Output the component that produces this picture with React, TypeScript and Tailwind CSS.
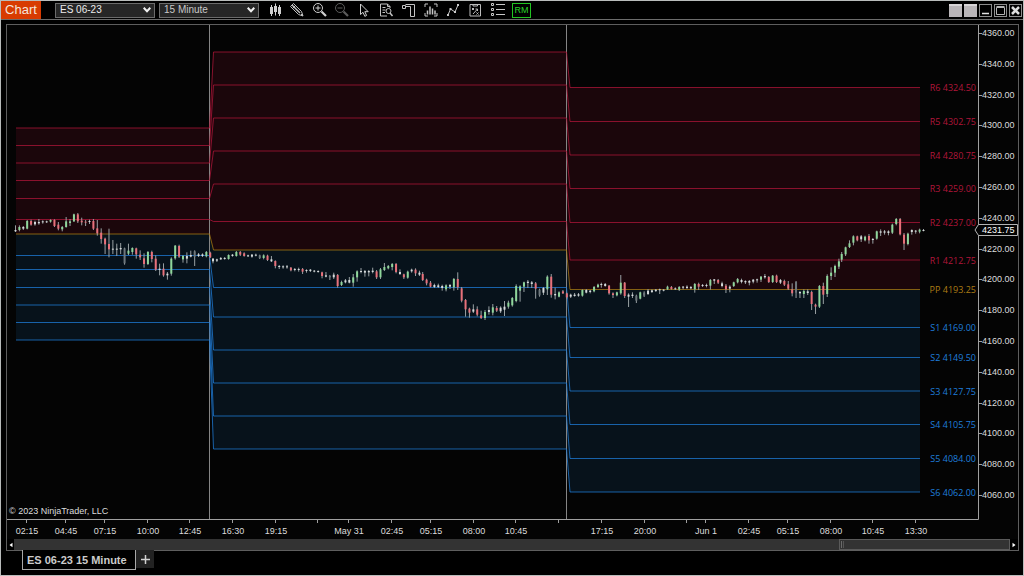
import React, { useState } from "react";

type Kind = "g" | "r" | "w" | "d";
type Bar = [Kind, number, number, number, number];

interface BarGroup {
    x: number;
    y: number;
    bars: Bar[];
}

const BAR_STEP = 3.895;

const BAR_COLORS: Record<Kind, string> = {
    g: "#8fd69b",
    r: "#e8707a",
    w: "#d6dadb",
    d: "#6d767b",
};

// [kind, high, body top, body bottom, low], in thirds of a pixel below the group's y
const barGroups: BarGroup[] = [
    {
        x: 15.5,
        y: 120,
        bars: [
            ["w", 316, 330, 334, 336], ["g", 316, 321, 330, 334], ["w", 318, 321, 326, 330], ["g", 300, 303, 326, 328],
            ["r", 299, 303, 314, 317], ["w", 302, 306, 313, 317], ["w", 297, 306, 310, 314], ["w", 301, 304, 307, 311],
            ["w", 302, 304, 307, 309], ["g", 298, 300, 305, 308], ["r", 298, 300, 318, 321], ["r", 306, 314, 326, 331],
            ["g", 318, 321, 328, 334], ["g", 291, 304, 321, 323], ["g", 297, 304, 309, 318], ["g", 281, 283, 304, 306],
            ["r", 279, 283, 304, 309], ["r", 293, 302, 307, 316], ["r", 300, 305, 308, 318], ["w", 299, 303, 306, 312],
            ["r", 297, 303, 326, 330], ["r", 300, 325, 340, 347], ["r", 325, 338, 357, 371], ["r", 353, 356, 373, 402],
            ["r", 326, 372, 388, 412], ["w", 360, 386, 389, 402], ["w", 371, 386, 389, 408], ["w", 369, 384, 388, 402],
            ["d", 383, 385, 430, 434], ["g", 371, 392, 401, 405], ["g", 382, 384, 396, 404], ["r", 383, 385, 403, 416],
            ["r", 391, 404, 412, 420], ["r", 400, 415, 432, 443], ["g", 393, 396, 432, 435], ["r", 392, 396, 417, 427],
            ["r", 406, 416, 449, 453], ["w", 431, 446, 450, 466], ["r", 430, 446, 466, 470], ["w", 456, 461, 466, 479],
            ["g", 412, 416, 461, 467], ["g", 375, 377, 415, 419], ["r", 374, 378, 410, 414], ["g", 405, 408, 418, 428],
            ["w", 397, 408, 416, 430], ["w", 392, 405, 410, 412], ["d", 391, 394, 410, 438], ["w", 399, 403, 408, 411],
            ["w", 400, 403, 408, 411], ["g", 393, 396, 409, 412], ["r", 395, 398, 412, 414],
        ],
    },
    {
        x: 213,
        y: 190,
        bars: [
            ["w", 204, 206, 214, 220], ["w", 206, 208, 212, 216], ["w", 201, 204, 208, 210], ["w", 201, 204, 206, 209],
            ["g", 193, 195, 207, 209], ["w", 192, 194, 198, 200], ["g", 183, 186, 198, 200], ["r", 183, 186, 194, 198],
            ["r", 187, 190, 198, 200], ["w", 194, 196, 199, 201], ["w", 192, 194, 200, 203], ["w", 191, 194, 197, 199],
            ["d", 194, 196, 204, 207], ["g", 193, 196, 204, 208], ["r", 194, 197, 210, 213], ["w", 198, 208, 214, 216],
            ["r", 211, 213, 228, 235], ["w", 225, 228, 231, 237], ["w", 226, 229, 232, 236], ["w", 225, 229, 232, 236],
            ["r", 231, 233, 241, 244], ["w", 234, 237, 240, 244], ["w", 233, 237, 240, 245], ["r", 234, 237, 245, 252],
            ["w", 238, 240, 243, 248], ["w", 237, 239, 243, 246], ["w", 240, 242, 245, 247], ["w", 241, 243, 246, 248],
            ["r", 245, 247, 258, 265], ["w", 246, 256, 260, 262], ["d", 255, 258, 262, 270], ["w", 248, 254, 262, 267],
            ["r", 252, 255, 288, 293], ["g", 272, 276, 285, 288], ["w", 267, 271, 277, 280], ["w", 261, 270, 278, 280],
            ["g", 252, 262, 278, 290], ["g", 241, 244, 262, 275], ["w", 234, 243, 246, 250], ["w", 240, 243, 248, 260],
            ["w", 240, 243, 247, 259], ["w", 233, 242, 246, 250], ["r", 240, 244, 262, 267], ["g", 234, 238, 262, 267],
            ["g", 219, 231, 240, 243], ["g", 225, 228, 235, 238], ["g", 219, 222, 231, 241], ["r", 219, 222, 246, 250],
            ["w", 238, 246, 252, 255], ["r", 251, 253, 262, 267], ["g", 242, 245, 263, 266], ["w", 236, 239, 244, 248],
            ["r", 235, 239, 250, 258], ["w", 242, 248, 254, 258],
        ],
    },
    {
        x: 422.7,
        y: 230,
        bars: [
            ["r", 126, 132, 150, 153], ["r", 146, 149, 160, 166], ["r", 153, 158, 170, 172], ["w", 161, 165, 171, 174],
            ["w", 161, 166, 171, 174], ["w", 164, 168, 174, 182], ["g", 163, 166, 178, 184], ["w", 162, 165, 170, 177],
            ["g", 144, 147, 172, 182], ["r", 127, 147, 172, 180], ["r", 171, 175, 212, 217], ["r", 207, 210, 238, 260],
            ["r", 233, 236, 248, 263], ["w", 223, 238, 245, 249], ["r", 229, 238, 254, 259], ["r", 242, 256, 264, 267],
            ["g", 240, 246, 264, 270], ["w", 229, 240, 246, 254], ["g", 222, 232, 248, 256], ["r", 228, 234, 242, 246],
            ["w", 229, 233, 244, 249], ["w", 213, 230, 239, 258], ["g", 212, 218, 230, 236], ["g", 201, 204, 226, 230],
            ["g", 163, 168, 213, 217], ["g", 166, 169, 182, 215], ["g", 155, 157, 170, 186], ["w", 150, 155, 159, 174],
            ["w", 153, 157, 162, 174], ["r", 156, 160, 176, 206], ["d", 176, 179, 196, 200], ["w", 171, 174, 188, 195],
            ["g", 136, 140, 178, 195], ["r", 132, 140, 194, 203], ["w", 173, 192, 196, 208], ["g", 184, 187, 200, 202],
            ["r", 180, 184, 190, 192], ["r", 188, 190, 202, 206], ["w", 191, 194, 200, 204], ["w", 189, 194, 198, 200],
            ["w", 189, 193, 197, 200], ["g", 178, 180, 197, 200], ["w", 177, 180, 188, 190], ["w", 180, 182, 186, 190],
            ["g", 168, 171, 184, 187], ["g", 161, 164, 171, 174],
        ],
    },
    {
        x: 601.3,
        y: 230,
        bars: [
            ["w", 158, 162, 165, 173], ["w", 159, 162, 168, 170], ["r", 165, 167, 190, 194], ["r", 187, 190, 195, 204],
            ["g", 185, 187, 196, 199], ["g", 135, 158, 190, 194], ["r", 156, 158, 198, 204], ["w", 190, 194, 200, 231],
            ["w", 187, 194, 198, 204], ["d", 194, 197, 212, 219], ["g", 185, 187, 206, 208], ["d", 184, 188, 197, 201],
            ["w", 177, 182, 192, 195], ["w", 178, 181, 186, 189], ["w", 177, 179, 183, 186], ["w", 176, 178, 181, 192],
            ["w", 177, 179, 182, 184], ["g", 167, 170, 178, 180], ["r", 168, 171, 177, 179], ["w", 172, 175, 178, 180],
            ["g", 168, 171, 179, 183], ["w", 168, 170, 173, 178], ["w", 166, 170, 174, 177], ["w", 168, 171, 175, 178],
            ["g", 159, 162, 178, 188], ["r", 158, 162, 170, 180], ["w", 162, 165, 168, 171], ["w", 161, 165, 168, 172],
            ["g", 147, 150, 167, 179], ["w", 147, 148, 152, 162], ["r", 147, 150, 158, 162], ["w", 155, 160, 168, 172],
            ["r", 162, 167, 178, 189], ["w", 166, 170, 176, 187], ["g", 155, 157, 168, 171], ["g", 144, 147, 157, 160],
            ["w", 146, 150, 156, 160], ["w", 151, 153, 157, 162], ["w", 150, 153, 158, 166], ["w", 147, 149, 155, 160],
            ["w", 146, 148, 151, 158], ["g", 138, 140, 149, 156], ["w", 132, 138, 142, 146], ["r", 138, 141, 156, 159],
            ["g", 135, 137, 156, 159], ["r", 134, 137, 156, 159], ["w", 147, 150, 158, 162], ["r", 149, 153, 164, 168],
            ["r", 153, 163, 176, 180], ["r", 160, 178, 190, 199], ["d", 153, 156, 188, 204], ["w", 183, 186, 190, 204],
            ["g", 178, 183, 192, 204], ["w", 178, 184, 189, 195], ["r", 182, 186, 222, 240], ["r", 221, 224, 230, 252],
            ["g", 165, 168, 230, 234], ["r", 158, 168, 194, 222], ["g", 133, 138, 192, 201], ["g", 112, 128, 138, 150],
            ["g", 104, 108, 128, 141], ["g", 86, 94, 110, 117],
        ],
    },
    {
        x: 841.7,
        y: 200,
        bars: [
            ["g", 156, 162, 179, 186], ["g", 140, 142, 163, 168], ["g", 121, 130, 141, 144], ["g", 106, 109, 128, 136],
            ["r", 107, 109, 121, 124], ["w", 105, 109, 118, 126], ["g", 107, 110, 121, 124], ["r", 102, 108, 121, 131],
            ["w", 114, 117, 120, 131], ["g", 92, 94, 116, 119], ["w", 88, 94, 98, 108], ["w", 90, 94, 98, 104],
            ["w", 91, 94, 99, 106], ["g", 71, 74, 98, 102], ["g", 54, 57, 72, 76], ["r", 54, 57, 103, 106],
            ["r", 99, 104, 131, 150], ["g", 98, 101, 132, 136], ["w", 88, 90, 96, 104], ["w", 90, 92, 95, 101],
            ["g", 86, 89, 95, 100], ["w", 87, 90, 92, 94],
        ],
    },
];

// y of each level in the three sessions
const levels = [
    { label: "R6 4324.50", y: [128, 52, 87.5], color: "#b0163a" },
    { label: "R5 4302.75", y: [145.5, 85, 121.5], color: "#b0163a" },
    { label: "R4 4280.75", y: [163, 118, 155], color: "#b0163a" },
    { label: "R3 4259.00", y: [180.5, 151, 188.5], color: "#b0163a" },
    { label: "R2 4237.00", y: [198.5, 184, 222.5], color: "#b0163a" },
    { label: "R1 4212.75", y: [219.5, 221.5, 260], color: "#b0163a" },
    { label: "PP 4193.25", y: [234, 250, 289.5], color: "#ad7d14" },
    { label: "S1 4169.00", y: [255.5, 287.5, 327.5], color: "#1f7edb" },
    { label: "S2 4149.50", y: [269.5, 317, 357.5], color: "#1f7edb" },
    { label: "S3 4127.75", y: [287.5, 350, 391], color: "#1f7edb" },
    { label: "S4 4105.75", y: [305, 383, 424.5], color: "#1f7edb" },
    { label: "S5 4084.00", y: [322.5, 416, 458.5], color: "#1f7edb" },
    { label: "S6 4062.00", y: [340, 449, 492], color: "#1f7edb" },
];

const SESSION_X = [16, 209.5, 213.5, 566.5, 570, 920];

const times = [
    { x: 27, label: "02:15" },
    { x: 66, label: "04:45" },
    { x: 105, label: "07:15" },
    { x: 148, label: "10:00" },
    { x: 190, label: "12:45" },
    { x: 233, label: "16:30" },
    { x: 276, label: "19:15" },
    { x: 318, label: "" },
    { x: 349, label: "May 31" },
    { x: 392, label: "02:45" },
    { x: 431, label: "05:15" },
    { x: 474, label: "08:00" },
    { x: 516, label: "10:45" },
    { x: 559, label: "" },
    { x: 602, label: "17:15" },
    { x: 645, label: "20:00" },
    { x: 687, label: "" },
    { x: 706, label: "Jun 1" },
    { x: 749, label: "02:45" },
    { x: 788, label: "05:15" },
    { x: 831, label: "08:00" },
    { x: 873, label: "10:45" },
    { x: 916, label: "13:30" },
];

const prices = Array.from({ length: 16 }, (_, i) => 4360 - i * 20);

const levelPoints = (y: number[]) => SESSION_X.map((x, i) => `${x},${y[Math.floor(i / 2)]}`);

const areaPoints = (a: number[], b: number[]) => [...levelPoints(a), ...levelPoints(b).reverse()].join(" ");

function PriceChart() {
    return (
        <svg viewBox="7 25 1011 514" className="block h-auto w-full bg-[#040404] font-['Liberation_Sans',Arial,sans-serif]" role="img" aria-label="ES 06-23 15 minute chart with pivot levels">
            <polygon points={areaPoints(levels[0].y, levels[6].y)} fill="#1b060b" />
            <polygon points={areaPoints(levels[6].y, levels[12].y)} fill="#07121b" />

            <path d="M209.5 25V519M566.5 25V519" stroke="#858585" fill="none" />

            {levels.map((level) => (
                <polyline key={level.label} points={levelPoints(level.y).join(" ")} fill="none" stroke={level.color} strokeWidth={1} strokeOpacity={0.75} />
            ))}

            {barGroups.map((group) =>
                group.bars.map(([kind, high, top, bottom, low], i) => {
                    const x = group.x + i * BAR_STEP;
                    return (
                        <g key={`${group.x}-${i}`}>
                            <rect x={x - 0.5} y={group.y + high / 3} width={1} height={(low - high) / 3} fill="#98a0a3" />
                            <rect x={x - 1} y={group.y + top / 3} width={2} height={Math.max(1, (bottom - top) / 3)} fill={BAR_COLORS[kind]} />
                        </g>
                    );
                })
            )}

            {levels.map((level) => (
                <text key={level.label} x={976} y={Math.floor(level.y[2]) + 4} textAnchor="end" fontSize={9} fill={level.color} className="font-['Open_Sans',sans-serif]">
                    {level.label}
                </text>
            ))}

            {/* Price axis */}
            <path d="M978.5 25V519.5H7" stroke="#a0a0a0" fill="none" />
            {prices.map((price, i) => (
                <g key={price}>
                    <path d={`M979 ${Math.round(33 + i * 30.8) + 0.5}h3`} stroke="#a0a0a0" />
                    <text x={982} y={Math.round(33 + i * 30.8) + 3} fontSize={9} fill="#dcdcdc">
                        {price.toFixed(2)}
                    </text>
                </g>
            ))}
            <path d="M975 230l3.5-5.5H1017.5v11H978.5z" fill="#040404" stroke="#b4b4b4" />
            <text x={982} y={233} fontSize={9} fill="#ffffff">4231.75</text>

            {/* Time axis */}
            {times.map((time) => (
                <g key={time.x}>
                    <path d={`M${time.x - 0.5} 520v3`} stroke="#a0a0a0" />
                    <text x={time.x} y={534} textAnchor="middle" fontSize={9} fill="#dcdcdc">{time.label}</text>
                </g>
            ))}

            <text x={9} y={514} fontSize={9} fill="#dcdcdc">© 2023 NinjaTrader, LLC</text>
        </svg>
    );
}

const tools = [
    {
        name: "Chart style",
        color: "text-[#d0d0d0]",
        icon: (
            <>
                <path d="M4.5 3v11M8.5 1.500v12M12.5 3v11" />
                <path d="M3 5h3v7H3zM7 4h3v6H7zM11 5h3v7h-3z" fill="currentColor" stroke="none" />
            </>
        ),
    },
    {
        name: "Drawing tools",
        color: "text-[#c0c0c0]",
        icon: (
            <>
                <path d="M1.5 4.500L4.500 1.5l8 8 1.500 4.500-4.500-1.500z" />
                <path d="M3 3l8 8" strokeWidth={1.5} />
                <path d="M3.500 6.500l3-3M12 12l2 2" />
            </>
        ),
    },
    {
        name: "Zoom in",
        color: "text-[#d0d0d0]",
        icon: (
            <>
                <circle cx="6" cy="6" r="4.5" />
                <path d="M3.5 6h5M6 3.500v5" />
                <path d="M9.500 9.500l4.500 4.500" strokeWidth={2.2} />
            </>
        ),
    },
    {
        name: "Zoom out",
        color: "text-[#5c5c5c]",
        icon: (
            <>
                <circle cx="6" cy="6" r="4.5" />
                <path d="M3.500 6h5" />
                <path d="M9.500 9.500l4.500 4.500" strokeWidth={2.2} />
            </>
        ),
    },
    { name: "Cursor", color: "text-[#d0d0d0]", icon: <path d="M4.500 2v10.500l2.500-2.200 1.800 4 1.800-.8-1.800-3.800h3.400z" /> },
    {
        name: "Data box",
        color: "text-[#c4c4c4]",
        icon: (
            <>
                <path d="M12 6V4.500L9.500 2H2.500v12H9M9.500 2v2.500H12M4.500 5.500h3M4.500 8h3M4.500 10.500h2.500" />
                <circle cx="10.500" cy="9" r="2.500" />
                <path d="M12 11l2.500 3" strokeWidth={1.500} />
            </>
        ),
    },
    { name: "Chart trader", color: "text-[#c4c4c4]", icon: <path d="M1.500 3.500h3v3h-3zM4.500 4.500h5M4.500 2.500h9v12h-4v-10" /> },
    {
        name: "Data series",
        color: "text-[#c4c4c4]",
        icon: (
            <>
                <path d="M2 5V2h3M11 2h3v3M14 11v3h-3M5 14H2v-3" />
                <path d="M4.500 8.500v4M7 4.500v8M9.500 6.500v6M12 8.500v4" strokeWidth={1.500} />
            </>
        ),
    },
    {
        name: "Indicators",
        color: "text-[#c8c8c8]",
        icon: (
            <>
                <path d="M3 13l2.500-6 4.500 3 3-7" />
                <path d="M2 12h2v2H2zM4.500 6h2v2h-2zM9 9h2v2H9zM12 2h2v2h-2z" fill="currentColor" stroke="none" />
            </>
        ),
    },
    {
        name: "Strategies",
        color: "text-[#bcbcbc]",
        icon: (
            <>
                <path d="M3 2.500h10.500v11.500H3zM6 2.500v1.500h4.500V2.500" />
                <path d="M5 6l2 2M7 6L5 8M6 12l4.500-5M8.500 7h2v2M9.500 10.500l2 2M11.500 10.500l-2 2" />
            </>
        ),
    },
    {
        name: "Properties",
        color: "text-[#c8c8c8]",
        icon: (
            <>
                <path d="M1.500 1.500h2v2h-2zM1.500 6.500h2v2h-2zM1.500 11.500h2v2h-2z" />
                <path d="M6 2.500H15M6 7.500H15M6 12.500H15" />
            </>
        ),
    },
];

function ToolbarSelect({ label, options, tone }: { label: string; options: string[]; tone: string }) {
    const [value, setValue] = useState(options[0]);

    return (
        <div className="grid h-[15px] w-[100px] shrink-0 items-center">
            <select
                aria-label={label}
                value={value}
                onChange={(e) => setValue(e.target.value)}
                className={`col-start-1 row-start-1 h-[15px] w-full appearance-none border border-[#6b6b6b] bg-[#262626] px-1 text-[10px] leading-3 ${tone}`}
            >
                {options.map((option) => (
                    <option key={option}>{option}</option>
                ))}
            </select>
            <svg viewBox="0 0 8 6" className="pointer-events-none col-start-1 row-start-1 mr-1 h-[6px] w-[8px] justify-self-end" fill="none" stroke="#f0f0f0" strokeWidth="2">
                <path d="M.7 .8L4 4.300 7.300 .8" />
            </svg>
        </div>
    );
}

export default function App() {
    return (
        <div className="flex min-h-screen flex-col border border-[#b9bcbb] bg-black font-['Liberation_Sans',Arial,sans-serif] text-[#d4d4d4]">
            <header className="flex h-[19px] items-center border-b border-[#6b6b6b]">
                <h1 className="h-[18px] w-10 shrink-0 bg-[#d83b01] text-center text-[13px] leading-[18px] text-[#f4e4dc]">Chart</h1>
                <div className="ml-[14px] flex gap-1">
                    <ToolbarSelect label="Instrument" options={["ES 06-23", "NQ 06-23"]} tone="text-[#ececec]" />
                    <ToolbarSelect label="Interval" options={["15 Minute", "5 Minute"]} tone="text-[#c8c8c8]" />
                </div>
                <div className="ml-2 flex w-[264px] shrink-0 items-center justify-between">
                    {tools.map((tool) => (
                        <button key={tool.name} type="button" aria-label={tool.name} className={`h-4 w-4 ${tool.color}`}>
                            <svg viewBox="0 0 16 16" className="h-4 w-4" fill="none" stroke="currentColor" strokeWidth="1">
                                {tool.icon}
                            </svg>
                        </button>
                    ))}
                    <button type="button" className="h-[15px] w-[19px] border border-[#22c322] text-center text-[9px] leading-[13px] text-[#2bd62b]">
                        RM
                    </button>
                </div>
                <div className="ml-auto flex gap-[2px] pr-px">
                    <button type="button" aria-label="Instrument link" className="h-[13px] w-[13px] border-t-2 border-[#d8d5d7] bg-[#b9b5b8]" />
                    <button type="button" aria-label="Interval link" className="h-[13px] w-[13px] border-t-2 border-[#d8d5d7] bg-[#b9b5b8]" />
                    <button type="button" aria-label="Minimize" className="h-[13px] w-[13px] border border-[#8c8c8c]">
                        <svg viewBox="0 0 11 11" className="block h-[11px] w-[11px]" stroke="#e0e0e0" strokeWidth="1.500">
                            <path d="M2 8.500h7" />
                        </svg>
                    </button>
                    <button type="button" aria-label="Maximize" className="h-[13px] w-[13px] border border-[#8c8c8c]">
                        <svg viewBox="0 0 11 11" className="block h-[11px] w-[11px]" fill="none" stroke="#b4b4b4">
                            <path d="M1.500 2.500h8v7h-8zM1.500 1.500h8" />
                        </svg>
                    </button>
                    <button type="button" aria-label="Close" className="h-[13px] w-[13px] border border-[#8c8c8c]">
                        <svg viewBox="0 0 11 11" className="block h-[11px] w-[11px]" stroke="#dcdcdc" strokeWidth="2.500">
                            <path d="M2 2l7 7M9 2L2 9" />
                        </svg>
                    </button>
                </div>
            </header>

            <main className="mt-1 mr-1 ml-[5px] border border-[#5e5e5e]">
                <PriceChart />
                <div className="flex h-[11px]">
                    <button type="button" aria-label="Scroll left" className="flex w-[7px] items-center justify-center">
                        <svg viewBox="0 0 4 6" className="h-[6px] w-[4px]" fill="#ffffff">
                            <path d="M3.500 .8v4.400L.5 3z" />
                        </svg>
                    </button>
                    <div className="flex-[827] bg-[#333333]" />
                    <div className="flex flex-[168] items-center gap-px border border-[#5a5a5a] bg-[#333333] pl-px">
                        <div className="h-[7px] w-px bg-[#6a6a6a]" />
                        <div className="h-[7px] w-px bg-[#555555]" />
                    </div>
                    <button type="button" aria-label="Scroll right" className="flex w-2 items-center justify-center">
                        <svg viewBox="0 0 4 6" className="h-[6px] w-[4px]" fill="#ffffff">
                            <path d="M.5 .8v4.400l3-2.200z" />
                        </svg>
                    </button>
                </div>
            </main>

            <nav className="-mt-px flex pb-1 pl-[21px]">
                <button type="button" className="h-5 w-[114px] border border-t-0 border-[#a8a8a8] bg-black px-1 text-left text-[11px] leading-[18px] font-bold whitespace-nowrap text-[#cccccc]">
                    ES 06-23 15 Minute
                </button>
                <button type="button" aria-label="Add tab" className="flex h-[18px] w-[18px] items-center justify-center bg-[#222222]">
                    <svg viewBox="0 0 9 9" className="h-[9px] w-[9px]" stroke="#d0d0d0" strokeWidth="1.500">
                        <path d="M4.500 0v9M0 4.500h9" />
                    </svg>
                </button>
            </nav>
        </div>
    );
}
